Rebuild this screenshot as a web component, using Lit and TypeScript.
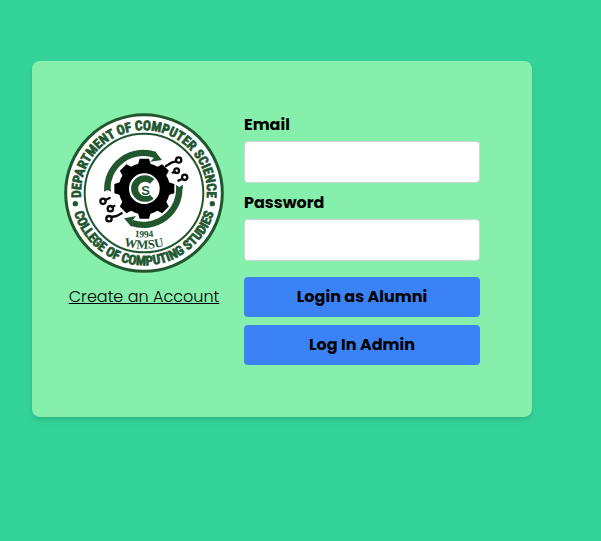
import { LitElement, html, css, svg } from "lit";
import { customElement } from "lit/decorators.js";

const TEETH = [0, 45, 90, 135, 180, 225, 270, 315];

@customElement("department-seal")
class DepartmentSeal extends LitElement {
  static styles = css`
    :host { display: block; width: 160px; }
    svg { display: block; width: 100%; height: auto; }
    .ring { fill: #fff; stroke: #21572f; }
    .green { fill: #21572f; }
    .arc { fill: none; stroke: #21572f; stroke-width: 19; }
    .wire { fill: none; stroke: #0a0a0a; stroke-width: 7; stroke-linecap: round; stroke-linejoin: round; }
    .motto { fill: #21572f; stroke: #21572f; stroke-width: 2; font-family: "Roboto Condensed", "Liberation Sans Narrow", "Liberation Sans", sans-serif; font-weight: 700; font-size: 40px; text-anchor: middle; }
    .serif { fill: #21572f; font-family: "Liberation Serif", serif; font-weight: 700; text-anchor: middle; }
    .year { font-size: 29px; }
    .school { font-size: 38px; }
    .initial { fill: #21572f; font-family: "Liberation Sans", sans-serif; font-weight: 700; font-size: 39px; text-anchor: middle; }
  `;

  render() {
    return html`
      <svg viewBox="-240 -240 480 480" role="img" aria-label="Department of Computer Science seal">
        <defs>
          <path id="upper" d="M-185 39A189 189 0 1 1 185 39" />
          <path id="lower" d="M-217 20A218 218 0 0 0 217 20" />
          <path id="name" d="M-100 143A220 220 0 0 0 100 143" />
          <path id="date" d="M-80 118A220 220 0 0 0 80 118" />
        </defs>
        <circle class="ring" r="235" stroke-width="9" />
        <circle class="ring" r="178" stroke-width="6" />
        <text class="motto"><textPath href="#upper" startOffset="50%">DEPARTMENT OF COMPUTER SCIENCE</textPath></text>
        <text class="motto"><textPath href="#lower" startOffset="50%">COLLEGE OF COMPUTING STUDIES</textPath></text>
        <circle class="green" cx="-206" cy="32" r="8" />
        <circle class="green" cx="205" cy="32" r="8" />

        <path class="arc" d="M-110 -8A108 108 0 0 1 34 -114" />
        <path class="green" d="M-121 -10L-118 -4L-110 -11L-99 -4L-100 -12Z" />
        <path class="green" d="M32 -126L54 -99L19 -94L30 -106Z" />
        <path class="arc" d="M106 -16A108 108 0 0 1 -36 90" />
        <path class="green" d="M-60 76L-24 69L-34 82L-34 96L-38 101Z" />
        <path class="green" d="M96 -19L95 -25L106 -18L117 -25L116 -12L97 -12Z" />

        <g transform="translate(1 -13)">
          <circle r="77" />
          ${TEETH.map((a) => svg`<path d="M-20 -70L-14 -90H14L20 -70Z" transform=${`rotate(${a})`} />`)}
          <circle r="46" fill="#fff" />
        </g>
        <path class="green" d="M31 -42A41 40 0 1 0 29 17L16 4A21 21 0 1 1 18 -28Z" />
        <text class="initial" x="5" y="7" stroke="#fff" stroke-width="6" paint-order="stroke">S</text>

        <g class="wire">
          <circle cx="104" cy="-99" r="8" />
          <path d="M96 -95L82 -91L66 -81" />
          <circle cx="98" cy="-67" r="7" />
          <path d="M92 -63L86 -61" />
          <circle cx="122" cy="-47" r="8" />
          <path d="M115 -42L103 -37" />
          <circle cx="-123" cy="25" r="8" />
          <path d="M-116 21L-103 15" />
          <circle cx="-101" cy="47" r="8" />
          <path d="M-95 42L-89 39" />
          <circle cx="-105" cy="77" r="8" />
          <path d="M-98 72L-82 69L-67 61" />
        </g>
        <text class="serif year"><textPath href="#date" startOffset="50%">1994</textPath></text>
        <text class="serif school"><textPath href="#name" startOffset="50%">WMSU</textPath></text>
      </svg>
    `;
  }
}

@customElement("app-root")
class AppRoot extends LitElement {
  static styles = css`
    :host { display: block; box-sizing: border-box; min-height: 100vh; padding: 61px 32px; background: #34d399; color: #000; font: 400 16px/24px Poppins, Inter, "Open Sans", sans-serif; }
    * { box-sizing: border-box; }
    .card { display: flex; gap: 20px; max-width: 500px; padding: 52px 52px 52px 32px; border-radius: 8px; background: #86efac; box-shadow: 0 4px 6px -1px rgb(0 0 0 / 0.1), 0 2px 4px -2px rgb(0 0 0 / 0.1); }
    .brand { display: flex; flex-direction: column; align-items: center; gap: 12px; flex: none; }
    .link { color: inherit; font-weight: 300; text-decoration: underline; }
    .form { display: flex; flex: 1; min-width: 0; flex-direction: column; gap: 8px; }
    .field { display: flex; flex-direction: column; gap: 4px; }
    .label { font-weight: 700; font-size: 16px; }
    .input { width: 100%; height: 42px; padding: 8px; border: 1px solid #d1d5db; border-radius: 4px; background: #fff; font: inherit; }
    .actions { display: flex; flex-direction: column; gap: 8px; margin-top: 8px; }
    .button { height: 40px; padding: 8px 16px; border: 0; border-radius: 4px; background: #3b82f6; color: #000; font: inherit; font-weight: 700; cursor: pointer; }
  `;

  render() {
    return html`
      <main class="card">
        <div class="brand">
          <department-seal></department-seal>
          <a class="link" href="#register">Create an Account</a>
        </div>
        <form class="form" @submit=${(e: Event) => e.preventDefault()}>
          <div class="field">
            <label class="label" for="email">Email</label>
            <input class="input" id="email" type="email" />
          </div>
          <div class="field">
            <label class="label" for="password">Password</label>
            <input class="input" id="password" type="password" />
          </div>
          <div class="actions">
            <button class="button" type="submit">Login as Alumni</button>
            <button class="button" type="button">Log In Admin</button>
          </div>
        </form>
      </main>
    `;
  }
}
